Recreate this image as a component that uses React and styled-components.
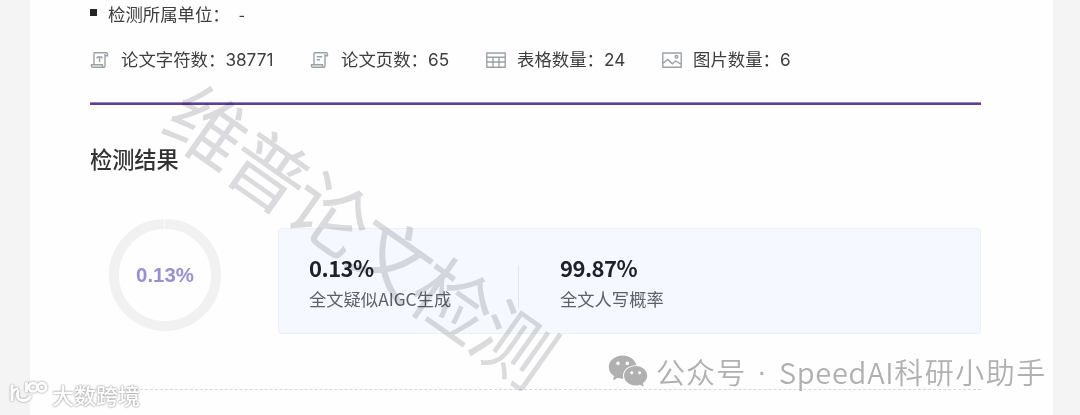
import styled, { createGlobalStyle } from "styled-components";
import { AiFillWechat } from "react-icons/ai";

const stats = [
  { name: "论文字符数", value: "38771", icon: "chars", width: 220 },
  { name: "论文页数", value: "65", icon: "pages", width: 176 },
  { name: "表格数量", value: "24", icon: "table", width: 176 },
  { name: "图片数量", value: "6", icon: "image", width: 160 },
];

const rates = [
  { value: "0.13%", label: "全文疑似AIGC生成" },
  { value: "99.87%", label: "全文人写概率" },
];

const StatIcon = ({ type }) => (
  <Icon viewBox="0 0 20 18">
    {(type === "chars" || type === "pages") && (
      <>
        <path d="M4 13.5V2.5Q4 1.8 4.8 1.8H16Q17.5 1.8 17.5 3.2V4.8H15" />
        <path d="M15 3V15Q15 16.3 13.8 16.3H3Q1.5 16.3 1.5 15V13.8H12.5V15Q12.5 16.3 13.8 16.3" />
        <path d={type === "chars" ? "M7 6H12M9.5 6V11M7 6V7.4M12 6V7.4" : "M6.8 5.8H12.2M6.8 8.8H10"} />
      </>
    )}
    {type === "table" && (
      <path d="M.8 2H19.2V16.2H.8ZM.8 6.2H19.2M.8 11H19.2M7 6.2V16.2M13 6.2V16.2" />
    )}
    {type === "image" && (
      <>
        <path d="M.8 2H19.2V16.2H.8ZM.8 12.5L5.8 8.5L10.3 12.8L13.7 10L19.2 13.5" />
        <circle cx="14.5" cy="5.8" r="1.3" />
      </>
    )}
  </Icon>
);

const App = () => {
  return (
    <Page>
      <GlobalStyle />
      <Sheet>
        <Unit>
          <Bullet />
          <span>检测所属单位：</span>
          <Dash>-</Dash>
        </Unit>
        <Stats>
          {stats.map(({ name, value, icon, width }) => (
            <Stat key={name} $width={width}>
              <StatIcon type={icon} />
              <StatName>{name}：</StatName>
              <Count>{value}</Count>
            </Stat>
          ))}
        </Stats>
        <Rule />
        <Title>检测结果</Title>
        <Result>
          <Ring>0.13%</Ring>
          <Panel>
            {rates.map(({ value, label }) => (
              <Rate key={label}>
                <h3>{value}</h3>
                <p>{label}</p>
              </Rate>
            ))}
          </Panel>
        </Result>
        <Divider />
      </Sheet>
      <Watermark>维普论文检测</Watermark>
      <Account>
        <AiFillWechat />
        <AccountType>公众号</AccountType>
        <Dot>·</Dot>
        <AccountName>
          <Latin>SpeedAI</Latin>科研小助手
        </AccountName>
      </Account>
      <Brand>
        <svg viewBox="0 0 40 28">
          <path d="M4 6V22M4 15Q5 10.5 10 9.5M10.5 11Q7 20.5 14.5 21.5Q21 21.5 22.5 16.5" />
          <path d="M18.5 3.5V13" />
          <circle cx="25" cy="8.2" r="4.2" />
          <circle cx="33.8" cy="8.2" r="4.2" />
        </svg>
        <span>大数跨境</span>
      </Brand>
    </Page>
  );
};

export default App;

const GlobalStyle = createGlobalStyle`
  * {
    box-sizing: border-box;
  }
  body {
    margin: 0;
    font-family: "Noto Sans CJK SC", sans-serif;
  }
  h2, h3, p {
    margin: 0;
  }
`;

const Page = styled.main`
  position: relative;
  width: 1080px;
  height: 415px;
  overflow: hidden;
  background: #f4f4f4;
`;

const Sheet = styled.section`
  width: 1023px;
  height: 415px;
  margin-left: 30px;
  padding: 0 72px 0 60px;
  background: #fefefe;
  color: #3e3e40;
  font-size: 17.4px;
`;

const Unit = styled.div`
  display: flex;
  align-items: center;
  height: 27px;
`;

const Bullet = styled.i`
  width: 7px;
  height: 7px;
  margin: 0 11px 2px 0;
  background: #252527;
`;

const Dash = styled.span`
  margin-left: 9px;
`;

const Stats = styled.div`
  display: flex;
  align-items: center;
  height: 34px;
  margin-top: 16px;
`;

const Stat = styled.div`
  display: flex;
  align-items: center;
  width: ${({ $width }) => $width}px;
  white-space: nowrap;
`;

const Icon = styled.svg`
  flex: none;
  width: 20px;
  height: 18px;
  margin-right: 11px;
  fill: none;
  stroke: #9aa1a5;
  stroke-width: 1.4;
`;

const StatName = styled.span`
  margin-top: -4px;
`;

const Count = styled.span`
  margin-top: -2px;
  font-family: Inter, sans-serif;
  font-size: 17.2px;
`;

const Rule = styled.div`
  height: 3px;
  margin-top: 25px;
  background: #5d3f93;
  border-top: 1px solid #9a82c0;
`;

const Title = styled.h2`
  margin-top: 37px;
  color: #333335;
  font-size: 22.2px;
  font-weight: 500;
  line-height: 32px;
`;

const Result = styled.div`
  display: flex;
  align-items: center;
  height: 114px;
  margin-top: 44px;
`;

const Ring = styled.div`
  position: relative;
  flex: none;
  display: flex;
  align-items: center;
  justify-content: center;
  width: 112px;
  height: 112px;
  margin-left: 19px;
  border: 10px solid #f1f1f1;
  border-radius: 50%;
  color: #9a8fd0;
  font: bold 20.4px "Liberation Sans", sans-serif;

  &::before {
    content: "";
    position: absolute;
    top: -10px;
    left: 45px;
    width: 1px;
    height: 10px;
    background: #fafafa;
  }
`;

const Panel = styled.div`
  display: flex;
  width: 703px;
  height: 106px;
  margin: 12px 0 0 57px;
  padding-left: 30px;
  border: 1px solid #edf1f7;
  border-radius: 4px;
  background: #f5f8fe;
`;

const Rate = styled.div`
  width: 209px;
  height: 43px;
  margin-top: 36px;

  & + & {
    padding-left: 41px;
    border-left: 1px solid #e5e6ec;
  }

  h3 {
    margin-top: -13px;
    color: #1f2029;
    font-size: 22px;
    letter-spacing: -0.5px;
    line-height: 30px;
  }

  p {
    margin-top: 2px;
    color: #5d626a;
    font-size: 17.3px;
    line-height: 30px;
    white-space: nowrap;
  }
`;

const Divider = styled.div`
  margin-top: 57px;
  border-top: 1px dashed #d8d8d8;
`;

const Watermark = styled.div`
  position: absolute;
  top: 232px;
  left: 362px;
  color: #dcdcde;
  font-size: 78.5px;
  letter-spacing: -3.3px;
  line-height: 1;
  white-space: nowrap;
  mix-blend-mode: multiply;
  transform: translate(-50%, -50%) rotate(35.2deg);
`;

const Account = styled.div`
  position: absolute;
  top: 350px;
  left: 606px;
  display: flex;
  align-items: center;
  height: 42px;
  color: #b0b0b0;
  font-size: 29px;
  font-weight: 350;
  line-height: 40px;
  white-space: nowrap;

  svg {
    width: 44px;
    height: 44px;
    margin-right: 6px;
  }
`;

const AccountType = styled.span`
  width: 93px;
  letter-spacing: 1.1px;
`;

const Dot = styled.span`
  width: 30px;
  padding-left: 8px;
  font-family: "Liberation Sans", sans-serif;
`;

const AccountName = styled.span`
  letter-spacing: 1.5px;
`;

const Latin = styled.span`
  letter-spacing: 0.7px;
`;

const Brand = styled.div`
  position: absolute;
  top: 378px;
  left: 8px;
  display: flex;
  align-items: center;
  height: 34px;
  color: #fff;
  font-size: 22px;
  font-weight: 500;
  text-shadow: 0 0 2px #999, 0 0 2px #aaa;

  span {
    margin-top: -3px;
  }

  svg {
    width: 40px;
    height: 28px;
    margin: -4px 4px 0 0;
    fill: none;
    stroke: #fff;
    stroke-width: 2.8;
    filter: drop-shadow(0 0 1px #888);
  }
`;
